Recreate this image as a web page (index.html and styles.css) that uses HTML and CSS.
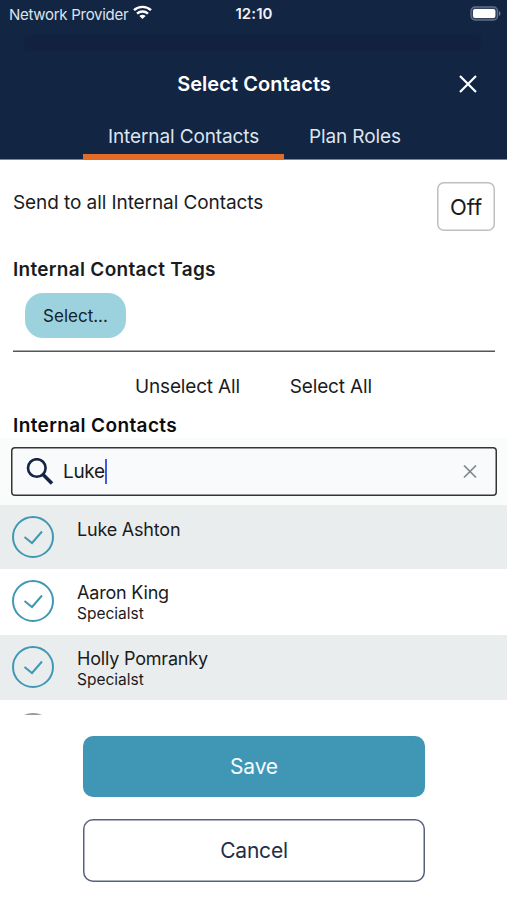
FILE: index.html
```html
<!DOCTYPE html>
<html lang="en">
<head>
<meta charset="utf-8">
<title>Select Contacts</title>
<link rel="stylesheet" href="styles.css">
</head>
<body>
<header class="header">
  <div class="status">
    <div class="carrier"><span>Network Provider</span>
      <svg width="19" height="15" viewBox="0 0 19 15" fill="none" stroke="#fff" stroke-width="2.4"><path d="M1 5.2C5.8.7 13.200.7 18 5.200M4 8.600c3.200-2.900 7.800-2.900 11 0"/><path d="M9.500 14 6.400 11c1.800-1.600 4.400-1.600 6.200 0z" fill="#fff" stroke="none"/></svg>
    </div>
    <time class="clock">12:10</time>
    <svg class="battery" width="31" height="15" viewBox="0 0 31 15"><rect x="1" y="1" width="26.600" height="13" rx="4" fill="#33435e" stroke="#616d85" stroke-width="1.300"/><rect x="3" y="3" width="22.400" height="9" rx="2" fill="#fff"/><path d="M29 5c2 1 2 4 0 5z" fill="#717c91"/></svg>
  </div>
  <div class="shade"></div>
  <div class="titlebar">
    <h1 class="title">Select Contacts</h1>
    <svg class="close" width="18" height="18" viewBox="0 0 18 18" stroke="#fff" stroke-width="2.200"><path d="M1 1l16 16M17 1L1 17"/></svg>
  </div>
  <nav class="tabs">
    <a class="tab tab-active"><span>Internal Contacts</span></a>
    <a class="tab"><span>Plan Roles</span></a>
  </nav>
</header>
<main>
  <section class="settings">
    <div class="send-row"><span class="send">Send to all Internal Contacts</span><button class="off">Off</button></div>
    <h2 class="heading tags">Internal Contact Tags</h2>
    <button class="chip">Select...</button>
  </section>
  <div class="bulk"><span>Unselect All</span><span>Select All</span></div>
  <h2 class="heading contacts-title">Internal Contacts</h2>
  <div class="search-wrap">
    <div class="search">
      <svg width="28" height="28" viewBox="0 0 28 28" fill="none" stroke="#132445"><circle cx="10.800" cy="10" r="8.800" stroke-width="2.600"/><path d="M17 16.500l9 9" stroke-width="3.500"/></svg>
      <span class="query">Luke</span><i class="caret"></i>
      <svg class="clear" width="14" height="14" viewBox="0 0 14 14" stroke="#7f898c" stroke-width="1.700"><path d="M1 .5l12 12M13 .5L1 12.500"/></svg>
    </div>
  </div>
  <ul class="list">
    <li class="row shaded"><svg class="check" width="42" height="42" viewBox="0 0 42 42"><circle cx="21" cy="21" r="20"/><path d="M12.500 21l7.500 6L30 15.500"/></svg><div><p class="name">Luke Ashton</p></div></li>
    <li class="row"><svg class="check" width="42" height="42" viewBox="0 0 42 42"><circle cx="21" cy="21" r="20"/><path d="M12.500 21l7.500 6L30 15.500"/></svg><div><p class="name">Aaron King</p><p class="role">Specialst</p></div></li>
    <li class="row shaded"><svg class="check" width="42" height="42" viewBox="0 0 42 42"><circle cx="21" cy="21" r="20"/><path d="M12.500 21l7.500 6L30 15.500"/></svg><div><p class="name">Holly Pomranky</p><p class="role">Specialst</p></div></li>
    <li class="row cut"><svg class="check idle" width="42" height="42" viewBox="0 0 42 42"><circle cx="21" cy="21" r="20"/></svg></li>
  </ul>
</main>
<footer class="actions">
  <button class="btn save">Save</button>
  <button class="btn cancel">Cancel</button>
</footer>
</body>
</html>
```
FILE: styles.css
```css
* { box-sizing: border-box; }
body { margin: 0; height: 900px; overflow: hidden; background: #fff; color: #1b1b1d; font-family: Inter, "Liberation Sans", sans-serif; }
h1, h2, p, ul { margin: 0; padding: 0; }
button { font-family: inherit; padding: 0; color: inherit; }
svg { display: block; flex: none; }
span, .name, .role, button, h1, h2, time { white-space: nowrap; }

.header { height: 160px; background: #122542; color: #fff; border-bottom: 1px solid #7c869a; }
.status { height: 28px; display: grid; grid-template-columns: 1fr auto 1fr; align-items: center; padding: 0 6px 0 9px; }
.carrier { display: flex; align-items: center; gap: 5px; font-size: 15px; letter-spacing: -.28px; color: #dde3ed; }
.carrier svg { margin-top: -3px; }
.clock { font-size: 15px; font-weight: 600; letter-spacing: .1px; color: #eef1f7; margin: -1px 1px 0 -1px; }
.battery { justify-self: end; margin-top: -2px; }
.shade { height: 14px; margin: 8px 27px 0 25px; background: #11213e; filter: blur(1px); }
.titlebar { height: 68px; display: grid; grid-template-columns: 1fr auto 1fr; align-items: center; padding: 0 30px 0 31px; }
.title { grid-column: 2; font-size: 20px; font-weight: 600; line-height: 24px; letter-spacing: .05px; }
.close { justify-self: end; }
.tabs { height: 42px; display: flex; padding-left: 83px; }
.tab { height: 42px; padding: 7px 25px 0; font-size: 19px; line-height: 23px; letter-spacing: -.12px; color: #dde4ef; border-bottom: 6px solid transparent; }
.tab-active { width: 201px; border-color: #e36a27; }

.settings { height: 192px; margin: 0 12px 0 13px; border-bottom: 1px solid #555658; box-shadow: 0 -.5px 0 #555658 inset; }
.send-row { display: flex; justify-content: space-between; padding-top: 22px; height: 98px; }
.send { font-size: 19px; line-height: 24px; margin-top: 9px; letter-spacing: -.08px; }
.off { width: 58px; height: 49px; border: 0; box-shadow: inset 0 0 0 1.500px #bfbfc1; border-radius: 7px; background: #fff; font-size: 22px; margin-right: 0; }
.heading { font-size: 19px; line-height: 24px; font-weight: 600; letter-spacing: .3px; }
.chip { display: block; width: 101px; height: 45px; margin: 11px 0 0 12px; border: 0; border-radius: 18px; background: #9bd2dd; color: #14222c; font-size: 17px; }
.bulk { height: 61px; padding: 22px 0 0 135px; display: flex; gap: 50px; font-size: 19px; line-height: 25px; letter-spacing: -.17px; }
.contacts-title { padding-left: 13px; height: 25px; line-height: 25px; letter-spacing: .38px; color: #0c0c0d; }
.search-wrap { height: 67px; padding: 9px 10px 9px 11px; background: #fafbfb; }
.search { height: 49px; display: flex; align-items: center; box-shadow: inset 0 0 0 1.500px #343538; border-radius: 4px; background: #f9fafb; padding: 0 20px 0 15px; }
.query { margin-left: 9px; font-size: 19px; letter-spacing: -.35px; }
.caret { width: 2px; height: 25px; background: #3d5ce0; }
.clear { margin-left: auto; }
.list { list-style: none; height: 210px; overflow: hidden; }
.row { height: 65.500px; display: flex; padding: 11px 12px 0; gap: 23px; }
.row:first-child { height: 64px; }
.row.cut { padding-top: 12.500px; }
.shaded { background: #eaeded; }
.check { fill: none; stroke: #4198b5; stroke-width: 2; }
.idle { stroke: #999; }
.name { font-size: 18px; line-height: 22px; margin-top: 2px; letter-spacing: -.2px; }
.row:first-child .name { margin-top: 3px; }
.role { font-size: 15.500px; line-height: 19px; }

.actions { padding: 21px 82px 0 83px; display: flex; flex-direction: column; gap: 22px; }
.btn { height: 61px; border: 0; border-radius: 10px; font-size: 21px; letter-spacing: -.2px; }
.save { background: #4097b5; color: #f5fbfd; }
.cancel { height: 63px; background: #fff; box-shadow: inset 0 0 0 1.500px #56617a; color: #202e4b; }
```
